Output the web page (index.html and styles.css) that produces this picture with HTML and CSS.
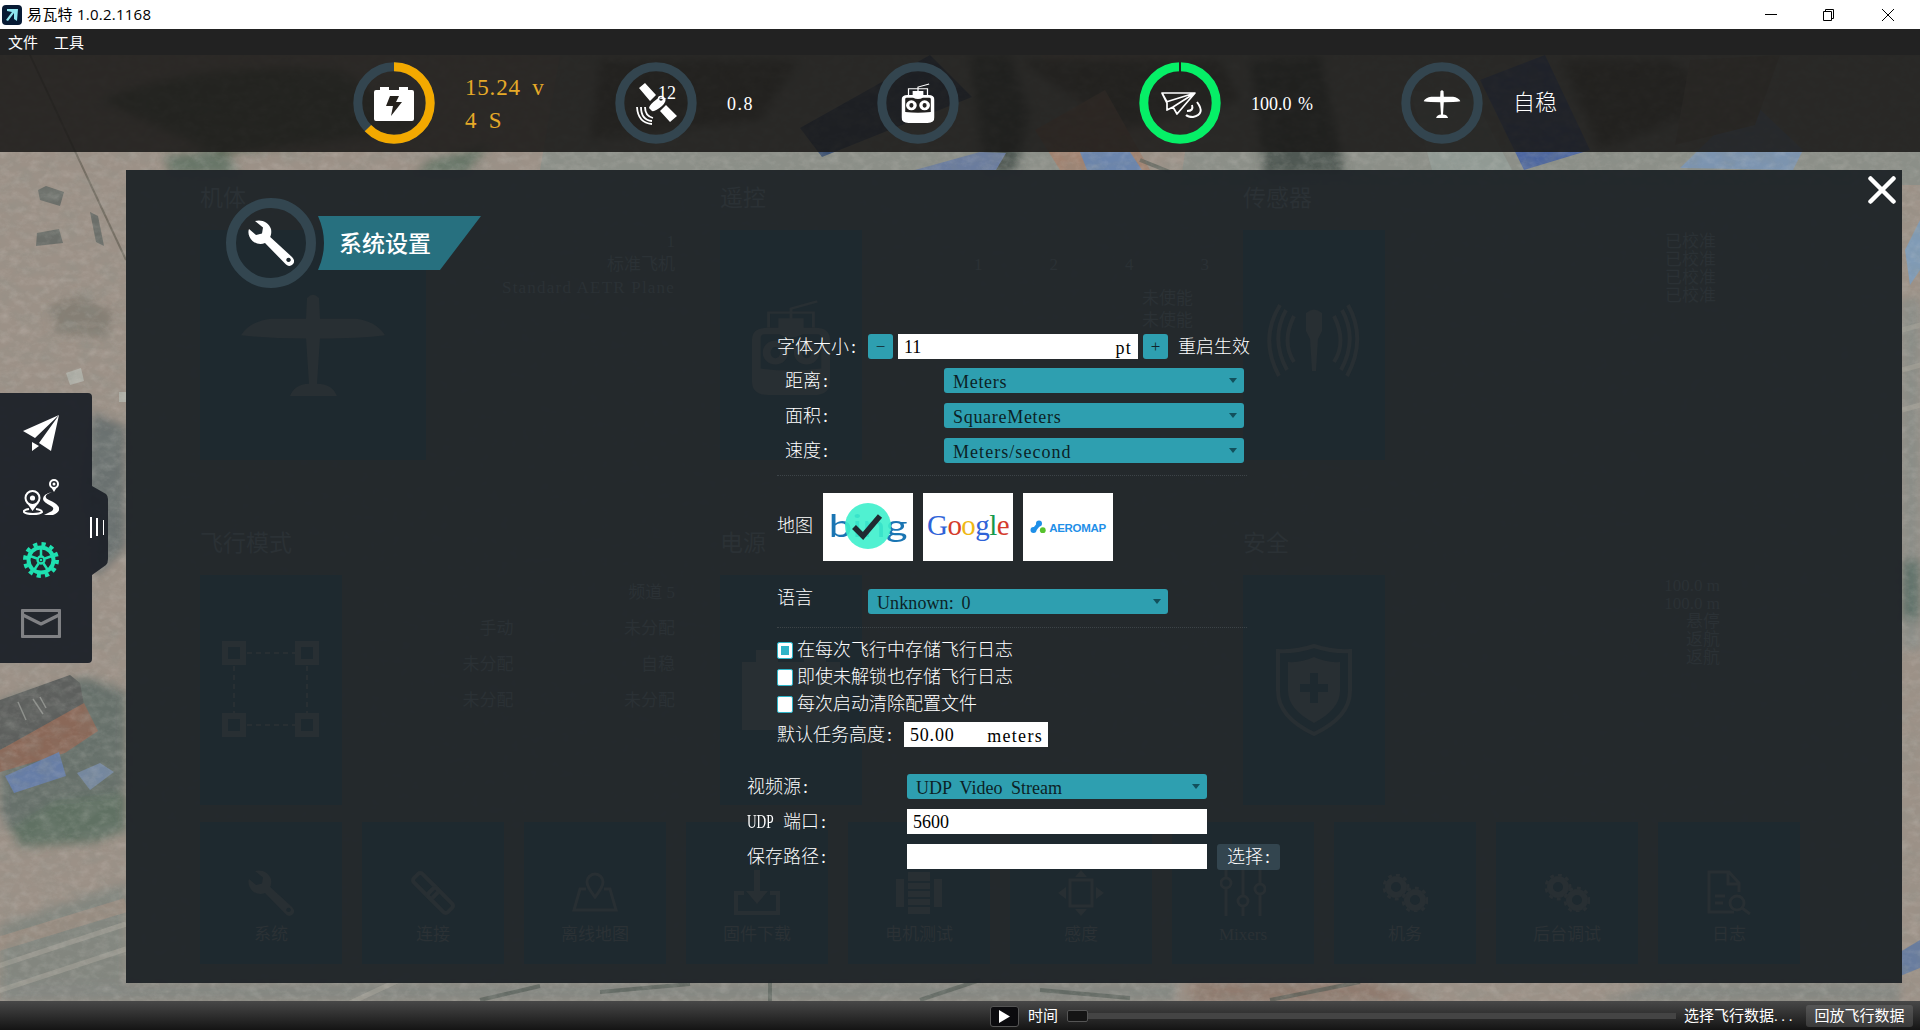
FILE: index.html
```html
<!DOCTYPE html>
<html lang="zh-CN">
<head>
<meta charset="utf-8">
<title>易瓦特 1.0.2.1168</title>
<link rel="stylesheet" href="styles.css">
</head>
<body>
<svg width="0" height="0" class="defs">
  <symbol id="i-wrench" viewBox="0 0 46 46"><path fill="currentColor" fill-rule="evenodd" d="M7 1C13-1 21 2 23 9c.6 3 .2 6-.8 8L44 37c3 3 2.500 6 .5 7.500-2 2-5 2-7.500-1L17 23c-4 2-9 1-12.500-2C1 17.500-.5 13 1 9l7 6 6-1.500L15 7.500zM40.500 37.700a2.200 2.200 0 1 0 .1 0z"/></symbol>
  <symbol id="i-plane" viewBox="0 0 144 124" preserveAspectRatio="none"><path fill="currentColor" d="M66 5q6-8 12 0l1 25h36q20 3 29 20-25 4-65 4l-3 55q15 0 20 15H49q4-14 19-15l-3-55Q25 54 0 50q9-17 30-20h35z"/></symbol>
  <symbol id="i-remote" viewBox="0 0 80 120" preserveAspectRatio="none"><path fill="none" stroke="currentColor" stroke-width="3" d="M17 36V17h46v19M40 30V12L67 3"/><path fill="currentColor" d="M27 24h26v12h12q15 0 15 15v52q0 17-17 17H17Q0 120 0 103V51q0-15 15-15h12z"/><g class="hole"><path d="M9 48q0-4 4-4h15q12 8 24 0h15q4 0 4 4v39q-31 5-62 0z"/></g><g fill="none" stroke="currentColor" stroke-width="8"><ellipse cx="24" cy="67" rx="9" ry="11"/><ellipse cx="56" cy="67" rx="9" ry="11"/></g></symbol>
  <symbol id="i-gears" viewBox="0 0 46 38"><g fill="none" stroke="currentColor" stroke-width="6"><circle cx="14" cy="13" r="8"/><circle cx="33" cy="26" r="8"/></g><g fill="none" stroke="currentColor" stroke-width="3" stroke-dasharray="4 4"><circle cx="14" cy="13" r="12"/><circle cx="33" cy="26" r="12"/></g></symbol>
</svg>

<header class="titlebar">
  <svg class="app-icon" viewBox="0 0 20 20"><rect width="20" height="20" rx="4" fill="#071a34"/><path d="M5 4h11l-1 12-3-2V8l-6 8-2-1 6-8-5-1z" fill="#8fe6ef"/></svg>
  <span class="app-title">易瓦特 1.0.2.1168</span>
  <svg class="window-buttons" viewBox="0 0 134 14"><g fill="none" stroke="#000"><path d="M0 6.500h12M58.500 3.500h8v9h-8zM60.500 3V1.500h8v9H67M117 1l12 12M129 1L117 13"/></g></svg>
</header>
<nav class="menubar"><span>文件</span><span>工具</span></nav>

<main class="stage">
  <svg class="map" viewBox="0 55 1920 946" preserveAspectRatio="none">
    <defs>
      <filter id="grain" x="0" y="0" width="100%" height="100%"><feTurbulence type="fractalNoise" baseFrequency=".05 .08" numOctaves="5" seed="8"/><feColorMatrix values="0 0 0 0 .25  0 0 0 0 .28  0 0 0 0 .25  1.300 1 0 0 -.95"/></filter>
      <filter id="light" x="0" y="0" width="100%" height="100%"><feTurbulence type="fractalNoise" baseFrequency=".1 .14" numOctaves="4" seed="21"/><feColorMatrix values="0 0 0 0 .82  0 0 0 0 .78  0 0 0 0 .74  1.300 1 0 0 -1"/></filter>
      <filter id="soft"><feGaussianBlur stdDeviation="5"/></filter>
    </defs>
    <rect y="55" width="1920" height="946" fill="#9c9187"/>
    <path d="M560 55h480l90 115H540zM1200 55h720v130H1180z" fill="#8c8f88"/>
    <g filter="url(#soft)">
      <path d="M92 412l34 15v120l-30 30-14-90z" fill="#6b716f"/>
      <path d="M50 305l30-10 35 18-10 25-50-5z" fill="#857f74"/>
      <path d="M0 702l85-25 41 15v95l-30 25-86 20-10-20z" fill="#66706a"/>
      <path d="M10 828l45-28 71-8v38l-30 12-75 5z" fill="#617163"/>
      <path d="M0 925l126-42v118H0z" fill="#83867f"/>
      <path d="M165 155l60-5 15 25h-70zM430 160l60-15-25 30h-50z" fill="#687668"/>
      <path d="M100 100q100-40 240-30l90 60-210 25z" fill="#646c5c"/>
      <path d="M970 55h40l20 60-15 57h-30zM1250 60l70-5 25 120h-80z" fill="#505952"/>
      <path d="M0 982h1176v20H0zM1660 982h240v20h-300z" fill="#858782"/>
      <path d="M1190 982h180l60 20h-240z" fill="#8f7a6e"/>
      <path d="M1902 300h18v350h-18z" fill="#8b8d87"/>
      <path d="M1902 560h18v60h-18z" fill="#5f7169"/>
      <path d="M600 60h200l-40 60-170 20zM1020 60h200l20 40-120 30zM1560 60h110l60 40-130 50z" fill="#5e5f57"/>
    </g>
    <path d="M30 55l96 205" stroke="#756e63" stroke-width="2"/>
    <path d="M0 700l70-25 10 8 4 22L0 750z" fill="#5d5f5d"/>
    <path d="M18 702l8 18M33 699l10 15M40 697l6 11" stroke="#8e908c" stroke-width="1.500"/>
    <path d="M0 750l84-47 14 28-33 22-65 19z" fill="#8a6858"/>
    <path d="M5 776l54-24 7 24-52 17z" fill="#667da6"/><path d="M77 773l23-10 14 9-24 18z" fill="#7487a0"/>
    <path d="M800 128L930 55l42 42-150 60z" fill="#394f73"/>
    <path d="M915 170l65-18 26 1-10 17z" fill="#6a7c9e"/>
    <path d="M1035 130l70-40 45 80h-90z" fill="#a18270"/>
    <path d="M1080 152h50l12 18h-55z" fill="#6b85ad"/>
    <path d="M1480 80l65-25 45 95-66 20z" fill="#4b65a0"/>
    <path d="M1410 90l65 10 37 70h-80z" fill="#929b95"/>
    <path d="M1680 168l70-68 53 50-10 20z" fill="#7c94b0"/>
    <path d="M1690 60l90-5-25 70-80 20z" fill="#817c71"/>
    <path d="M1905 250l15-30v50l-10 15z" fill="#809bb6"/>
    <path d="M1900 952l20-12v28l-20 8z" fill="#687c9e"/>
    <g fill="none" stroke="#a6a49a" stroke-width="5" opacity=".6"><path d="M-5 967l131-43M-5 992l131-43M350 1003l60-28M1902 330l30-8M1902 370l30-8M1902 410l30-8"/></g>
    <path d="M-5 945l131-40" fill="none" stroke="#a08f82" stroke-width="14" opacity=".7"/>
    <g fill="none" stroke="#4c5750" stroke-width="4" opacity=".6"><path d="M480 1000l60-14M600 992l90-8M770 980v22M920 1000l60-20M1040 990l90 8M1140 160l30 12M1270 1000l90-18"/></g>
    <g fill="#6b6e69"><path d="M38 190l8-4 18 6-4 14-20-6zM37 233l22-4 4 14-27 3zM90 212l8 4 6 30-8-4z"/></g>
    <g fill="#b0b0a8"><path d="M66 373l15-5 3 13-14 4zM119 392h7v10h-7z"/></g>
    <rect y="55" width="1920" height="946" filter="url(#grain)" opacity=".32"/>
    <rect y="55" width="1920" height="946" filter="url(#light)" opacity=".18"/>
  </svg>

  <section class="hud">
    <div class="gauge">
      <svg class="ring" viewBox="-41 -41 82 82"><circle r="36.200"/><circle class="amber" r="36.200" pathLength="100" stroke-dasharray="62.800 100" transform="rotate(-90)"/><path fill="#fff" d="M-20-11q0-2 2-2h4v-3h9v3H5v-3h9v3h4q2 0 2 2v27q0 2-2 2h-36q-2 0-2-2z"/><path fill="#25211c" d="M-4-7H5L2-1h6L-3 13l2-10h-7z"/></svg>
      <div class="readout amber-text"><span>15.24 v</span><span>4 S</span></div>
    </div>
    <div class="gauge">
      <svg class="ring" viewBox="-41 -41 82 82"><circle r="36.200"/><g fill="#fff"><path d="M-17-15l6-5 11 12-6 6zM4 8l6-6 11 11-7 6z"/><path d="M-7 5q0-3 8-9 5-4 8-1 2 3-3 8-7 6-10 5z"/></g><circle r="2.500" cx="5" cy="-4" fill="#222" stroke="#fff" stroke-width="1.500"/><path fill="none" stroke="#fff" stroke-width="1.800" d="M-11 4q0 9 8 11M-15 4q0 13 11 14M-19 4q1 16 15 17"/></svg>
      <span class="sat-count">12</span>
      <span class="value hdop">0.8</span>
    </div>
    <div class="gauge">
      <svg class="ring" viewBox="-41 -41 82 82"><circle r="36.200"/><g color="#fff" class="rc"><use href="#i-remote" x="-16.500" y="-20" width="33" height="40"/></g></svg>
    </div>
    <div class="gauge">
      <svg class="ring" viewBox="-41 -41 82 82"><circle class="green" r="36.200"/><path d="M0-41v10" stroke="#242321" stroke-width="2"/><path fill="none" stroke="#fff" stroke-width="1.700" stroke-linejoin="round" d="M-18-10H15L-3 11l-4-7-6 3v-7zM15-10L-14-1M15-10L-7 4M-18-10l5 9"/><path fill="none" stroke="#fff" stroke-width="2" d="M12 2q2 6-5 6M17-1q9 12-4 15-5 0-7-2"/></svg>
      <span class="value link">100.0 %</span>
    </div>
    <div class="gauge">
      <svg class="ring" viewBox="-41 -41 82 82"><circle r="36.200"/><g color="#fff"><use href="#i-plane" x="-18.500" y="-13" width="37" height="28"/></g></svg>
      <span class="mode">自稳</span>
    </div>
  </section>

  <aside class="sidebar">
    <svg class="side-shape" viewBox="0 0 108 270"><path d="M0 0h88q4 0 4 4v89l14 8q2 2 2 5v60q0 4-2 6l-14 10v84q0 4-4 4H0z" fill="#1e222a" fill-opacity=".96"/><path fill="none" stroke="#fff" d="M91 124v21" stroke-width="2"/><path stroke="#fff" d="M97 125v18" stroke-width="2"/><path stroke="#fff" d="M103.500 127v15"/></svg>
    <div class="side-icons">
      <svg viewBox="0 0 36 36"><path fill="#fff" d="M0 16L36 0 12 23zM36 0L28 36 16 28zM9 27l7 4-7 5z"/></svg>
      <svg viewBox="0 0 36 36"><g fill="none" stroke="#fff" stroke-width="2"><circle cx="9.500" cy="19" r="7"/><circle cx="31" cy="5" r="4"/><path d="M6 30q-6 1-5 3 2 2 9 2t9-2q0-2-6-3"/></g><circle cx="9.500" cy="19" r="2.600" fill="#fff"/><circle cx="31" cy="5" r="1.500" fill="#fff"/><path fill="#fff" d="M4 24l5.500 8 6-8-5.500 2zM28 8l3 5 3-5zM29 13q-9 2-9 7 0 3 8 7 4 2 1 5l-8 4h9q9-4 5-9-2-3-9-6-8-4 3-8z"/></svg>
      <svg viewBox="-18 -18 36 36"><g fill="none" stroke="#1ee0b0"><circle r="12.500" stroke-width="4"/><circle r="16" stroke-width="4" stroke-dasharray="4.190 4.190"/><circle r="3.500" stroke-width="2.400"/><path stroke-width="2.500" d="M0-4v-7M4-1.500l7-2.500M-4-1.500l-7-2.500M2.500 3.500l4 6M-2.500 3.500l-4 6"/></g><circle r="1.300" fill="#1ee0b0"/></svg>
      <svg class="mail" viewBox="0 0 40 29"><path d="M1.500 1.500h37v26h-37zM2 6l18 9 18-9" fill="none" stroke="#808184" stroke-width="3.200" stroke-linejoin="round"/></svg>
    </div>
  </aside>

  <section class="panel">
    <div class="dash">
      <div class="dash-grid">
        <article class="sec"><h3>机体</h3><div class="sec-body"><div class="card wide"><svg class="g-plane"><use href="#i-plane"/></svg></div><div class="facts frame"><span>1</span><span>标准飞机</span><span class="latin">Standard AETR Plane</span></div></div></article>
        <article class="sec"><h3>遥控</h3><div class="sec-body"><div class="card"><svg class="g-remote"><use href="#i-remote"/></svg></div><div class="facts remote"><p><span>1</span><span>2</span><span>4</span><span>3</span></p><span>未使能</span><span>未使能</span></div></div></article>
        <article class="sec"><h3>传感器</h3><div class="sec-body"><div class="card"><svg class="g-sensor" viewBox="0 0 96 84"><path fill="currentColor" d="M40 10q8-7 16 0v18l-4 8-2 32h-4l-2-32-4-8z"/><path fill="none" stroke="currentColor" stroke-width="4" d="M28 13q-13 26 0 46M20 7q-16 29 1 60M14 2Q-7 36 13 73M68 13q13 26 0 46M76 7q16 29-1 60M82 2q19 34-1 71"/></svg></div><div class="facts sensors"><span>已校准</span><span>已校准</span><span>已校准</span><span>已校准</span></div></div></article>
        <article class="sec"><h3>飞行模式</h3><div class="sec-body"><div class="card"><svg class="g-mode" viewBox="0 0 98 98"><g fill="none" stroke="currentColor" stroke-width="6"><path d="M3 3h18v18H3zM76 3h18v18H76zM3 75h18v18H3zM76 75h18v18H76z"/><path stroke-width="2" stroke-dasharray="5 4" d="M25 12h48M25 84h48M12 25v48M85 25v48"/></g></svg></div><div class="facts modes"><span></span><span>频道 5</span><span>手动</span><span>未分配</span><span>未分配</span><span>自稳</span><span>未分配</span><span>未分配</span></div></div></article>
        <article class="sec"><h3>电源</h3><div class="sec-body"><div class="card"><svg class="g-battery" viewBox="0 0 98 80"><path fill="currentColor" d="M0 12h14V0h22v12h26V0h22v12h14v68H0z"/></svg></div></div></article>
        <article class="sec"><h3>安全</h3><div class="sec-body"><div class="card"><svg class="g-shield" viewBox="0 0 78 94"><path fill="none" stroke="currentColor" stroke-width="4" d="M39 3q18 6 36 5v40q0 26-36 43Q3 74 3 48V8q18 1 36-5z"/><path fill="currentColor" fill-rule="evenodd" d="M39 14q13 6 26 5v29q0 18-26 32-26-14-26-32V19q13 1 26-5zM35 30v11H25v8h10v11h8V49h10v-8H43V30z"/></svg></div><div class="facts safety"><span>100.0 m</span><span>100.0 m</span><span>悬停</span><span>返航</span><span>返航</span></div></div></article>
      </div>
      <div class="tools">
        <div class="tool"><svg viewBox="0 0 46 46"><use href="#i-wrench"/></svg><span>系统</span></div>
        <div class="tool"><svg viewBox="0 0 46 46"><g fill="none" stroke="currentColor" stroke-width="4" transform="rotate(45 23 23)"><rect x="-1" y="17" width="27" height="12" rx="3"/><rect x="20" y="17" width="27" height="12" rx="3"/></g></svg><span>连接</span></div>
        <div class="tool"><svg viewBox="0 0 46 46"><path fill="none" stroke="currentColor" stroke-width="3" d="M14 19H8L2 40h42l-6-21h-6M23 27q-8-10-8-15a8 8 0 0 1 16 0q0 5-8 15z"/></svg><span>离线地图</span></div>
        <div class="tool"><svg viewBox="0 0 46 46"><path fill="none" stroke="currentColor" stroke-width="4" d="M10 23H2v20h42V23h-8"/><path fill="currentColor" d="M20 0h6v21h8L23 34 12 21h8z"/></svg><span>固件下载</span></div>
        <div class="tool"><svg viewBox="0 0 46 46"><path fill="currentColor" d="M12 2h22v42H12zM0 9h8v28H0zM38 9h8v28h-8z"/><path stroke="#1e292f" stroke-width="2" d="M12 12h22M12 20h22M12 28h22M12 36h22"/></svg><span>电机测试</span></div>
        <div class="tool"><svg viewBox="0 0 46 46"><path fill="none" stroke="currentColor" stroke-width="3" d="M12 10h22v26H12z"/><path fill="currentColor" d="M23 0l6 7H17zM23 46l6-7H17zM0 23l8-6v12zM46 23l-8-6v12z"/></svg><span>感度</span></div>
        <div class="tool"><svg viewBox="0 0 46 46"><g fill="none" stroke="currentColor" stroke-width="3"><path d="M6 0v8M6 18v28M23 0v26M23 36v10M40 0v14M40 24v22"/><circle cx="6" cy="13" r="5"/><circle cx="23" cy="31" r="5"/><circle cx="40" cy="19" r="5"/></g></svg><span>Mixers</span></div>
        <div class="tool"><svg viewBox="0 0 46 38"><use href="#i-gears"/></svg><span>机务</span></div>
        <div class="tool"><svg viewBox="0 0 46 38"><use href="#i-gears"/></svg><span>后台调试</span></div>
        <div class="tool"><svg viewBox="0 0 46 46"><g fill="none" stroke="currentColor" stroke-width="3"><path d="M28 42H3V2h20l10 11v9M22 2v12h11M9 26h10M9 33h8"/><circle cx="31" cy="33" r="7"/><path d="M36 38l8 6"/></g></svg><span>日志</span></div>
      </div>
    </div>

    <div class="settings">
      <svg class="close" viewBox="0 0 28 28"><path d="M2.500 2.500l23 23M25.500 2.500l-23 23" stroke="#fff" stroke-width="4.500" stroke-linecap="round"/></svg>
      <div class="heading">
        <svg class="badge" viewBox="-45 -45 90 90"><circle r="40" fill="none" stroke="#334650" stroke-width="10"/><g color="#fff"><use href="#i-wrench" x="-23" y="-23" width="46" height="46"/></g></svg>
        <h2 class="banner"><svg viewBox="0 0 163 54" preserveAspectRatio="none"><path d="M0 0h163l-41 54H0q12-27 0-54z" fill="#27707f"/></svg><span>系统设置</span></h2>
      </div>

      <form class="form">
        <div class="row size-row"><label>字体大小<s>:</s></label><button type="button" class="step">−</button><div class="field size"><span>11</span><span class="unit">pt</span></div><button type="button" class="step">+</button><span class="note">重启生效</span></div>
        <div class="row unit-row"><label>距离<s>:</s></label><div class="combo t1"><span>Meters</span></div></div>
        <div class="row unit-row"><label>面积<s>:</s></label><div class="combo t2"><span>SquareMeters</span></div></div>
        <div class="row unit-row"><label>速度<s>:</s></label><div class="combo t3"><span>Meters/second</span></div></div>
        <div class="dots"></div>
        <div class="row maps">
          <label>地图</label>
          <div class="tile bing"><span>bing</span><svg class="check" viewBox="0 0 46 46"><circle cx="23" cy="23" r="23" fill="#3df0cc" fill-opacity=".9"/><path d="M9 24l9 9 17-20" fill="none" stroke="#202a31" stroke-width="5.500"/></svg></div>
          <div class="tile google"><span><i class="b">G</i><i class="r">o</i><i class="y">o</i><i class="b">g</i><i class="g">l</i><i class="r">e</i></span></div>
          <div class="tile aero"><svg viewBox="0 0 16 14"><path d="M4 10L9 4" stroke="#1e8fe8" stroke-width="4"/><circle cx="3.500" cy="10" r="3" fill="#1e8fe8"/><circle cx="9" cy="3.500" r="3" fill="#1e8fe8"/><circle cx="12.800" cy="10.200" r="2.900" fill="#56c22d"/></svg><span>AEROMAP</span></div>
        </div>
        <div class="row lang"><label>语言</label><div class="combo t4"><span>Unknown: 0</span></div></div>
        <div class="dots second"></div>
        <div class="checks">
          <label class="on"><i></i>在每次飞行中存储飞行日志</label>
          <label><i></i>即使未解锁也存储飞行日志</label>
          <label><i></i>每次启动清除配置文件</label>
        </div>
        <div class="row height-row"><label>默认任务高度<s>:</s></label><div class="field alt"><span class="num">50.00</span><span class="unit">meters</span></div></div>
        <div class="video">
          <div class="row"><label>视频源<s>:</s></label><div class="combo t5"><span>UDP Video Stream</span></div></div>
          <div class="row"><label><b>UDP</b>端口<s>:</s></label><div class="field long"><span>5600</span></div></div>
          <div class="row"><label>保存路径<s>:</s></label><div class="field long"></div><button type="button" class="choose">选择<s>:</s></button></div>
        </div>
      </form>
    </div>
  </section>
</main>

<footer class="statusbar">
  <button type="button" class="play"><svg viewBox="0 0 12 14"><path d="M0 0l12 7L0 14z" fill="#fff"/></svg></button>
  <span class="time">时间</span>
  <div class="slider"><i></i></div>
  <span class="pick">选择飞行数据<em>...</em></span>
  <button type="button" class="replay">回放飞行数据</button>
</footer>
</body>
</html>
```
FILE: styles.css
```css
* { box-sizing: border-box; }
body { margin: 0; width: 1920px; height: 1030px; overflow: hidden; display: flex; flex-direction: column; background: #222; color: #fff; font: 300 18px/1 "Liberation Serif", "Noto Sans CJK SC", serif; }
h2, h3, p { margin: 0; font-weight: inherit; font-size: inherit; }
i { font-style: normal; }
s { text-decoration: none; padding-left: 2px; }
button { font: inherit; color: inherit; border: 0; padding: 0; }
.defs { position: absolute; }

.titlebar { height: 29px; flex: none; display: flex; align-items: center; background: #fff; color: #000; padding-left: 2px; font: 400 15px/29px "Open Sans", "Noto Sans CJK SC", sans-serif; }
.app-icon { width: 20px; height: 20px; margin-right: 5px; }
.app-title { flex: 1; font-weight: 400; letter-spacing: .25px; }
.window-buttons { width: 134px; height: 14px; margin-right: 21px; }
.menubar { height: 26px; flex: none; display: flex; gap: 16px; padding-left: 8px; background: #222; font: 400 15px/26px "Noto Sans CJK SC", sans-serif; }

.stage { flex: 1; position: relative; }
.map { position: absolute; inset: 0; width: 100%; height: 100%; }
.hud { position: relative; height: 97px; padding-left: 353px; display: grid; grid-template-columns: repeat(5, 262px); align-items: center; background: rgba(24, 23, 22, .86); }
.gauge { position: relative; display: flex; align-items: center; gap: 30px; padding-bottom: 2px; }
.ring { width: 82px; height: 82px; }
.ring > circle:not([fill]) { fill: none; stroke: #33454f; stroke-width: 9; }
.ring > circle.amber { stroke: #f3a900; }
.ring > circle.green { stroke: #06ef67; }
.rc { --hole: #22211f; }
.hole { fill: var(--hole, #1e292f); }
.readout { display: flex; flex-direction: column; gap: 10px; font-size: 23px; letter-spacing: .8px; word-spacing: 5px; padding-top: 2px; }
.amber-text { color: #e6aa28; }
.value { font-size: 18px; white-space: nowrap; padding-top: 2px; }
.value.hdop { letter-spacing: 1.500px; }
.value.link { word-spacing: 2px; }
.mode { font-size: 22px; }
.sat-count { position: absolute; left: 43px; top: 22px; font-size: 18px; }

.sidebar { position: absolute; left: 0; top: 338px; width: 108px; height: 270px; }
.side-shape { position: absolute; inset: 0; }
.side-icons { position: relative; width: 82px; padding-top: 22px; display: flex; flex-direction: column; align-items: center; gap: 27.500px; }
.side-icons svg { width: 36px; height: 36px; flex: none; }
.side-icons .mail { width: 40px; height: 29px; margin-top: 3px; }

.panel { position: absolute; left: 126px; top: 115px; width: 1776px; height: 813px; background: rgba(32, 37, 41, .97); }
.dash { height: 812px; padding: 18px 0 0 74px; color: #2b3135; font-weight: 400; }
.dash-grid { display: grid; grid-template-columns: 520px 523px 1fr; grid-template-rows: 345px 289px; }
.sec h3 { font-size: 23px; line-height: 22px; height: 42px; }
.sec-body { display: flex; height: 230px; }
.card { width: 142px; height: 230px; background: #1e292f; display: flex; justify-content: center; align-items: center; flex: none; }
.card.wide { width: 226px; }
.card svg, .tool svg { color: #282f33; }
.g-plane { width: 144px; height: 102px; }
.g-remote { width: 78px; height: 96px; margin-top: 4px; }
.g-sensor { width: 96px; height: 84px; }
.g-mode { width: 98px; height: 98px; }
.g-battery { width: 98px; height: 80px; }
.g-shield { width: 78px; height: 94px; }
.facts { flex: 1; display: flex; flex-direction: column; align-items: flex-end; font-size: 17px; }
.facts.frame { padding: 3px 45px 0 0; gap: 6px; }
.facts.frame .latin { letter-spacing: 1.200px; }
.facts.remote { padding: 26px 50px 0 0; gap: 5px; }
.facts.remote p { display: flex; gap: 67px; margin: 0 -16px 12px 0; }
.facts.sensors { padding: 3px 186px 0 0; gap: 1px; }
.facts.safety { padding: 2px 182px 0 0; gap: 1px; }
.facts.modes { display: grid; grid-template-columns: 1fr 1fr; grid-template-rows: 26px 36px 36px 36px; text-align: right; padding: 0 45px 0 10px; }
.tools { display: flex; gap: 20px; }
.tool { width: 142px; height: 142px; background: #1e292f; display: flex; flex-direction: column; align-items: center; padding-top: 48px; gap: 10px; font-size: 17px; }
.tool svg { width: 46px; height: 46px; }

.settings { position: absolute; inset: 0; }
.close { position: absolute; right: 6px; top: 6px; width: 28px; height: 28px; }
.heading { display: flex; align-items: center; padding: 28px 0 0 100px; height: 118px; }
.badge { width: 90px; height: 90px; }
.banner { position: relative; width: 163px; height: 54px; margin-left: 2px; font: 500 23px/52px "Noto Sans CJK SC", sans-serif; padding-left: 21px; }
.banner svg { position: absolute; inset: 0; width: 100%; height: 100%; }
.banner span { position: relative; }

.form { padding: 46px 0 0 651px; width: 1200px; }
.row { display: flex; align-items: center; height: 25px; }
.row label { flex: none; white-space: nowrap; }
.size-row label { width: 91px; }
.step { width: 25px; height: 25px; border-radius: 3px; background: #2e9fb0; color: #10242b; font-size: 17px; line-height: 23px; }
.field { height: 25px; background: #fff; color: #000; display: flex; justify-content: space-between; align-items: center; padding: 0 6px; }
.field .unit { padding-top: 2px; letter-spacing: 1.200px; }
.field.size { width: 240px; margin: 0 5px; }
.field.alt { width: 144px; padding-right: 5px; }
.field.long { width: 300px; }
.field .num { letter-spacing: .8px; }
.note { margin-left: 10px; }
.unit-row { margin-top: 10px; padding-left: 8px; }
.size-row + .unit-row { margin-top: 9px; }
.unit-row label { width: 159px; }
.combo { width: 300px; height: 25px; border-radius: 3px; background: #2e9fb0; color: #0c1f26; padding: 2px 7px 0 9px; display: flex; justify-content: space-between; align-items: center; }
.combo::after { content: ""; border: 4px solid transparent; border-top: 5px solid #12505c; border-bottom: 0; margin-top: -2px; }
.t1 { letter-spacing: .7px; }
.t2 { letter-spacing: .7px; }
.t3 { letter-spacing: 1.050px; }
.t4 { letter-spacing: .1px; word-spacing: 3px; }
.t5 { letter-spacing: 0; word-spacing: 4px; }
.dots { width: 470px; margin-top: 12px; border-top: 1px dotted #3d4448; }
.maps { height: 68px; margin-top: 17px; }
.maps label { width: 46px; padding-bottom: 3px; }
.tile { width: 90px; height: 68px; margin-right: 10px; background: #fff; position: relative; display: flex; align-items: center; justify-content: center; }
.bing span { color: #1a75b3; font: 400 30px/30px "Lato", sans-serif; padding-bottom: 4px; transform: scaleX(1.400); }
.check { position: absolute; left: 22px; top: 10px; width: 46px; height: 46px; }
.google span { font: 400 29px/30px "Liberation Serif", serif; padding-bottom: 4px; letter-spacing: -.6px; }
.google .b { color: #2f63d8; }
.google .r { color: #d53b2a; }
.google .y { color: #efb814; }
.google .g { color: #159a4c; }
.aero { gap: 3px; }
.aero svg { width: 16px; height: 14px; }
.aero span { color: #1f8fe8; font: 700 11.500px/14px "Liberation Sans", sans-serif; letter-spacing: -.3px; padding-top: 1px; }
.lang { margin-top: 28px; }
.lang label { width: 91px; padding-bottom: 7px; }
.dots.second { margin-top: 13px; }
.checks { padding-top: 8px; }
.checks label { display: flex; align-items: center; height: 27px; }
.checks i { width: 16px; height: 17px; margin: 1px 4px 0 0; background: #fff; border: 1px solid #2fb4c8; border-radius: 2px; display: block; }
.checks .on i { background: #2fb4c8; box-shadow: inset 0 0 0 3px #fff; }
.height-row { margin-top: 5px; }
.height-row label { width: 127px; }
.height-row .unit { letter-spacing: 1.300px; }
.video { margin: 27px 0 0 -30px; display: grid; gap: 10px; }
.video label { width: 160px; }
.video b { font-weight: 300; display: inline-block; transform: scaleX(.74); transform-origin: left; width: 36px; }
.choose { width: 63px; height: 26px; margin-left: 10px; background: #33454f; border-radius: 3px; }

.statusbar { height: 29px; flex: none; display: flex; align-items: center; background: linear-gradient(#484848, #141414); padding: 1px 7px 0 990px; font-size: 15px; font-weight: 400; }
.play { width: 29px; height: 21px; background: #0b0b0e; border: 1px solid #555; border-radius: 3px; display: grid; place-items: center; }
.play svg { width: 11px; height: 13px; }
.time { margin: 0 9px; }
.slider { width: 609px; height: 6px; background: #444; display: flex; align-items: center; }
.slider i { width: 21px; height: 12px; background: #151515; border: 1px solid #555; border-radius: 2px; }
.pick { margin-left: 8px; width: 122px; }
.pick em { font-style: normal; letter-spacing: 3.600px; }
.replay { width: 107px; height: 22px; border-radius: 3px; background: linear-gradient(#565656, #3a3a3a); }
```
